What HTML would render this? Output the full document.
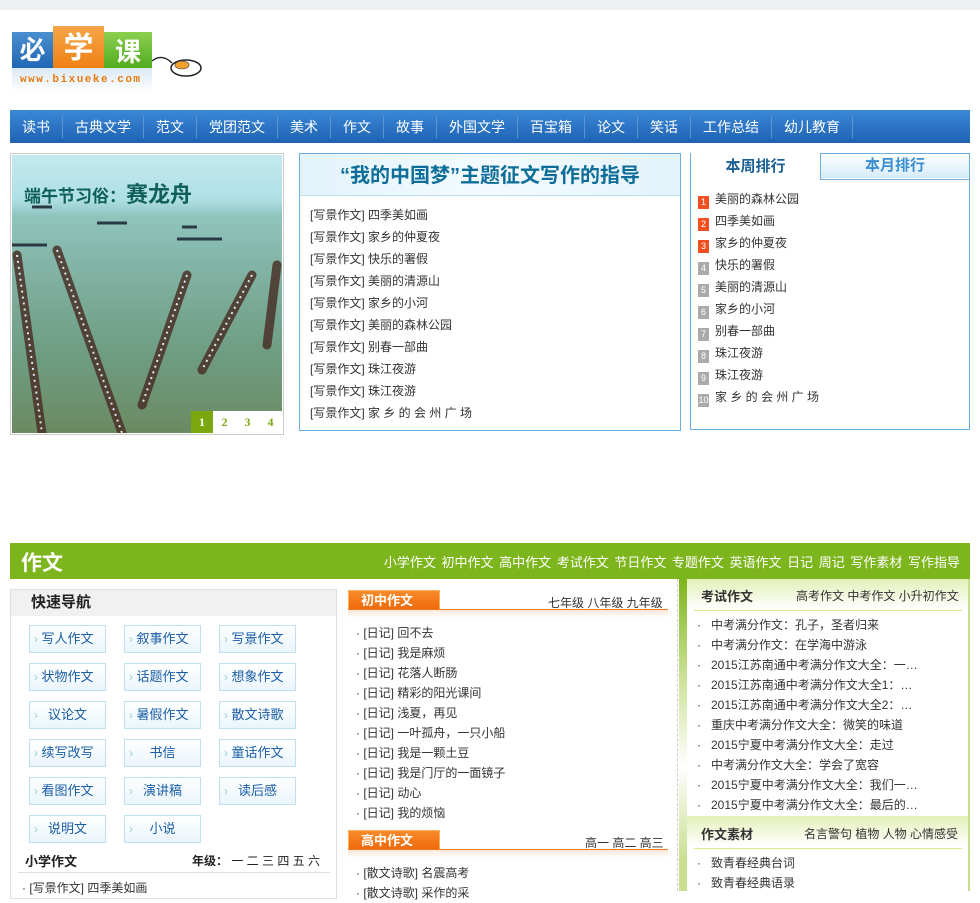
<!DOCTYPE html>
<html><head><meta charset="utf-8"><style>
*{margin:0;padding:0;box-sizing:border-box}
body{width:980px;height:891px;overflow:hidden;background:#fff;font-family:"Liberation Sans","Noto Sans CJK SC",sans-serif;font-size:12px;color:#333;position:relative}
.a{position:absolute}
ul{list-style:none}
.nav{left:10px;top:110px;width:960px;height:33px;background:linear-gradient(#3a88d6,#1f63b3);display:flex;align-items:center;padding-left:0}
.nav span{color:#fff;font-size:14px;padding:0 12px;border-right:1px solid #5b96d4;line-height:22px}
.mid li,.rk li{height:22px;line-height:22px;font-size:12px}
.rk li b{display:inline-block;width:11px;height:13px;color:#fff;font-size:9px;text-align:center;line-height:13px;margin-right:6px;font-weight:normal;vertical-align:-2px}
.qb{position:absolute;width:77px;height:28px;border:1px solid #bfe0f0;background:linear-gradient(#fff,#eaf5fb);color:#1a5ea6;font-size:13px;line-height:26px;text-align:center}
.qb:before{content:"›";position:absolute;left:4px;top:0;color:#9cc;font-size:12px}
.ol li{height:20px;line-height:20px;font-size:12px}
.ot{position:absolute;width:92px;height:20px;background:linear-gradient(#f98b2a,#f06a0a);color:#fff;font-weight:bold;font-size:13px;line-height:20px;padding-left:12px;border:1px solid #f7b05a}
.hd{position:absolute;height:1px;background:#f07a20}
.gl li{height:20px;line-height:20px;font-size:12px}
</style></head><body>
<div class="a" style="left:0;top:0;width:980px;height:10px;background:#eef1f4"></div>
<div class="a" style="left:12px;top:32px;width:41px;height:36px;background:linear-gradient(#4a90d0,#1f66b5);color:#fff;font-size:26px;font-weight:bold;text-align:center;line-height:36px">必</div>
<div class="a" style="left:53px;top:26px;width:51px;height:47px;background:linear-gradient(#f6a64a,#ee7c0c);color:#fff;font-size:30px;font-weight:bold;text-align:center;line-height:45px">学</div>
<div class="a" style="left:104px;top:32px;width:48px;height:40px;background:linear-gradient(#8cd050,#4ba71a);color:#fff;font-size:26px;font-weight:bold;text-align:center;line-height:40px">课</div>
<div class="a" style="left:12px;top:68px;width:140px;height:24px;background:linear-gradient(#dbe9f5,#fff)"></div>
<div class="a" style="left:20px;top:74px;color:#e87a10;font-size:11px;font-weight:bold;letter-spacing:1.5px;font-family:'Liberation Mono',monospace">www.bixueke.com</div>
<svg class="a" style="left:150px;top:55px" width="55" height="25"><path d="M2 6 Q12 -2 22 8" stroke="#222" fill="none" stroke-width="1.3"/><ellipse cx="36" cy="13" rx="15" ry="8" stroke="#222" fill="#fff" stroke-width="1.5"/><ellipse cx="32" cy="10" rx="7" ry="4" fill="#f0a030" stroke="#333" stroke-width=".6"/></svg>
<div class="a nav"><span>读书</span><span>古典文学</span><span>范文</span><span>党团范文</span><span>美术</span><span>作文</span><span>故事</span><span>外国文学</span><span>百宝箱</span><span>论文</span><span>笑话</span><span>工作总结</span><span>幼儿教育</span></div>
<div class="a" style="left:10px;top:153px;width:274px;height:282px;border:1px solid #ccc;padding:1px;background:#fff">
<div style="position:relative;width:270px;height:278px;overflow:hidden;background:linear-gradient(#c4eaf0 0%,#aedfe6 16%,#8fc4bc 22%,#7fb0a0 45%,#6f9e84 70%,#6b8a62 100%)">
<div style="position:absolute;left:12px;top:22px;color:#10605a;font-size:17px;font-weight:bold">端午节习俗：<span style="font-size:22px">赛龙舟</span></div>
<svg style="position:absolute;left:0;top:0" width="270" height="278"><g stroke="#4a3228" stroke-width="9" stroke-linecap="round" opacity=".85"><line x1="5" y1="100" x2="30" y2="278"/><line x1="45" y1="95" x2="110" y2="278"/><line x1="175" y1="120" x2="130" y2="250"/><line x1="240" y1="120" x2="190" y2="215"/><line x1="265" y1="110" x2="255" y2="190"/></g><g stroke="#dfe8ee" stroke-width="2" stroke-dasharray="2 4"><line x1="5" y1="100" x2="30" y2="278"/><line x1="45" y1="95" x2="110" y2="278"/><line x1="175" y1="120" x2="130" y2="250"/><line x1="240" y1="120" x2="190" y2="215"/></g><g stroke="#2a3a45" stroke-width="3"><line x1="20" y1="52" x2="40" y2="52"/><line x1="85" y1="68" x2="115" y2="68"/><line x1="165" y1="84" x2="210" y2="84"/><line x1="0" y1="90" x2="35" y2="90"/><line x1="170" y1="72" x2="185" y2="72"/></g></svg>
<div style="position:absolute;right:0;bottom:0;display:flex;background:#fff"><span style="width:22px;height:22px;background:#7aa80e;color:#fff;text-align:center;line-height:22px;font-weight:bold;font-family:'Liberation Serif'">1</span><span style="width:23px;text-align:center;line-height:22px;color:#7aa80e;font-weight:bold;font-family:'Liberation Serif'">2</span><span style="width:23px;text-align:center;line-height:22px;color:#7aa80e;font-weight:bold;font-family:'Liberation Serif'">3</span><span style="width:23px;text-align:center;line-height:22px;color:#7aa80e;font-weight:bold;font-family:'Liberation Serif'">4</span></div>
</div></div>
<div class="a mid" style="left:299px;top:153px;width:382px;height:278px;border:1px solid #6aaee0">
<div style="height:42px;background:linear-gradient(90deg,#e2f3fb,#f4fbfe,#e2f3fb);text-align:center;line-height:44px;color:#0e6e99;font-size:20px;font-weight:bold;border-bottom:1px solid #bde3f3;margin:0 0 8px">“我的中国梦”主题征文写作的指导</div>
<ul style="padding-left:10px"><li>[写景作文] 四季美如画</li><li>[写景作文] 家乡的仲夏夜</li><li>[写景作文] 快乐的署假</li><li>[写景作文] 美丽的清源山</li><li>[写景作文] 家乡的小河</li><li>[写景作文] 美丽的森林公园</li><li>[写景作文] 别春一部曲</li><li>[写景作文] 珠江夜游</li><li>[写景作文] 珠江夜游</li><li>[写景作文] 家 乡 的 会 州 广 场</li></ul></div>
<div class="a rk" style="left:690px;top:153px;width:280px;height:277px;border:1px solid #6aaee0">
<div style="height:26px;position:relative;border-bottom:1px solid #6aaee0;background:#fff"><div style="position:absolute;left:0;top:-1px;width:130px;height:27px;background:#fff;border-right:1px solid #6aaee0;color:#1a5e96;font-size:15px;font-weight:bold;text-align:center;line-height:27px">本周排行</div><div style="position:absolute;left:130px;top:0;width:148px;height:24px;background:linear-gradient(#fff,#d6ecfa);color:#3b8fd0;font-size:15px;font-weight:bold;text-align:center;line-height:24px">本月排行</div></div>
<ul style="padding:8px 0 0 7px"><li><b style="background:#f05020">1</b>美丽的森林公园</li><li><b style="background:#f05020">2</b>四季美如画</li><li><b style="background:#f05020">3</b>家乡的仲夏夜</li><li><b style="background:#aaa">4</b>快乐的署假</li><li><b style="background:#aaa">5</b>美丽的清源山</li><li><b style="background:#aaa">6</b>家乡的小河</li><li><b style="background:#aaa">7</b>别春一部曲</li><li><b style="background:#aaa">8</b>珠江夜游</li><li><b style="background:#aaa">9</b>珠江夜游</li><li><b style="background:#aaa">10</b>家 乡 的 会 州 广 场</li></ul></div>
<div class="a" style="left:10px;top:543px;width:960px;height:36px;background:#7db51d"><span style="position:absolute;left:11px;top:4px;color:#fff;font-size:21px;font-weight:bold">作文</span><span style="position:absolute;right:10px;top:9px;color:#fff;font-size:13px;word-spacing:2px">小学作文 初中作文 高中作文 考试作文 节日作文 专题作文 英语作文 日记 周记 写作素材 写作指导</span></div>
<div class="a" style="left:10px;top:589px;width:327px;height:310px;border:1px solid #e0e0e0">
<div style="height:26px;background:#f1f1f1;font-size:15px;font-weight:bold;color:#222;padding-left:20px;line-height:26px">快速导航</div></div>
<div class="qb" style="left:29px;top:625px">写人作文</div><div class="qb" style="left:124px;top:625px">叙事作文</div><div class="qb" style="left:219px;top:625px">写景作文</div>
<div class="qb" style="left:29px;top:663px">状物作文</div><div class="qb" style="left:124px;top:663px">话题作文</div><div class="qb" style="left:219px;top:663px">想象作文</div>
<div class="qb" style="left:29px;top:701px">议论文</div><div class="qb" style="left:124px;top:701px">暑假作文</div><div class="qb" style="left:219px;top:701px">散文诗歌</div>
<div class="qb" style="left:29px;top:739px">续写改写</div><div class="qb" style="left:124px;top:739px">书信</div><div class="qb" style="left:219px;top:739px">童话作文</div>
<div class="qb" style="left:29px;top:777px">看图作文</div><div class="qb" style="left:124px;top:777px">演讲稿</div><div class="qb" style="left:219px;top:777px">读后感</div>
<div class="qb" style="left:29px;top:815px">说明文</div><div class="qb" style="left:124px;top:815px">小说</div>
<div class="a" style="left:25px;top:851px;font-size:13px;font-weight:bold;color:#222">小学作文</div>
<div class="a" style="left:192px;top:852px;font-size:12px;color:#222"><b>年级：</b> 一 二 三 四 五 六</div>
<div class="a" style="left:18px;top:872px;width:312px;height:1px;background:#ddd"></div>
<div class="a" style="left:22px;top:879px;font-size:12px">· [写景作文] 四季美如画</div>
<div class="ot" style="left:348px;top:590px">初中作文</div>
<div class="hd" style="left:348px;top:609px;width:320px"></div>
<div class="a" style="left:348px;top:610px;width:320px;height:8px;background:linear-gradient(#fbe7d6,#fff)"></div>
<div class="a" style="left:548px;top:594px;font-size:12px">七年级 八年级 九年级</div>
<ul class="a ol" style="left:356px;top:623px"><li>· [日记] 回不去</li><li>· [日记] 我是麻烦</li><li>· [日记] 花落人断肠</li><li>· [日记] 精彩的阳光课间</li><li>· [日记] 浅夏，再见</li><li>· [日记] 一叶孤舟，一只小船</li><li>· [日记] 我是一颗土豆</li><li>· [日记] 我是门厅的一面镜子</li><li>· [日记] 动心</li><li>· [日记] 我的烦恼</li></ul>
<div class="ot" style="left:348px;top:830px">高中作文</div>
<div class="hd" style="left:348px;top:849px;width:320px"></div>
<div class="a" style="left:348px;top:850px;width:320px;height:8px;background:linear-gradient(#fbe7d6,#fff)"></div>
<div class="a" style="left:585px;top:834px;font-size:12px">高一 高二 高三</div>
<ul class="a ol" style="left:356px;top:863px"><li>· [散文诗歌] 名震高考</li><li>· [散文诗歌] 采作的采</li></ul>
<div class="a" style="left:677px;top:579px;width:0;height:312px;border-left:1px dashed #ccc"></div>
<div class="a" style="left:679px;top:579px;width:8px;height:312px;background:linear-gradient(#7db51d,#c8e090 30%,#fff 60%,#c8e090 90%)"></div>
<div class="a" style="left:968px;top:579px;width:2px;height:312px;background:#c5e08a"></div>
<div class="a" style="left:687px;top:579px;width:281px;height:30px;background:linear-gradient(#e3f0b8,#fff)"></div>
<div class="a" style="left:701px;top:586px;font-size:13px;font-weight:bold;color:#333">考试作文</div>
<div class="a" style="left:796px;top:587px;font-size:12px">高考作文 中考作文 小升初作文</div>
<div class="a" style="left:694px;top:610px;width:268px;height:1px;background:#dbe98f"></div>
<ul class="a gl" style="left:697px;top:615px"><li>·&nbsp;&nbsp; 中考满分作文：孔子，圣者归来</li><li>·&nbsp;&nbsp; 中考满分作文：在学海中游泳</li><li>·&nbsp;&nbsp; 2015江苏南通中考满分作文大全：一…</li><li>·&nbsp;&nbsp; 2015江苏南通中考满分作文大全1：…</li><li>·&nbsp;&nbsp; 2015江苏南通中考满分作文大全2：…</li><li>·&nbsp;&nbsp; 重庆中考满分作文大全：微笑的味道</li><li>·&nbsp;&nbsp; 2015宁夏中考满分作文大全：走过</li><li>·&nbsp;&nbsp; 中考满分作文大全：学会了宽容</li><li>·&nbsp;&nbsp; 2015宁夏中考满分作文大全：我们一…</li><li>·&nbsp;&nbsp; 2015宁夏中考满分作文大全：最后的…</li></ul>
<div class="a" style="left:687px;top:816px;width:281px;height:30px;background:linear-gradient(#e3f0b8,#fff)"></div>
<div class="a" style="left:701px;top:824px;font-size:13px;font-weight:bold;color:#333">作文素材</div>
<div class="a" style="left:804px;top:825px;font-size:12px">名言警句 植物 人物 心情感受</div>
<div class="a" style="left:694px;top:848px;width:268px;height:1px;background:#dbe98f"></div>
<ul class="a gl" style="left:697px;top:853px"><li>·&nbsp;&nbsp; 致青春经典台词</li><li>·&nbsp;&nbsp; 致青春经典语录</li></ul>
</body></html>
